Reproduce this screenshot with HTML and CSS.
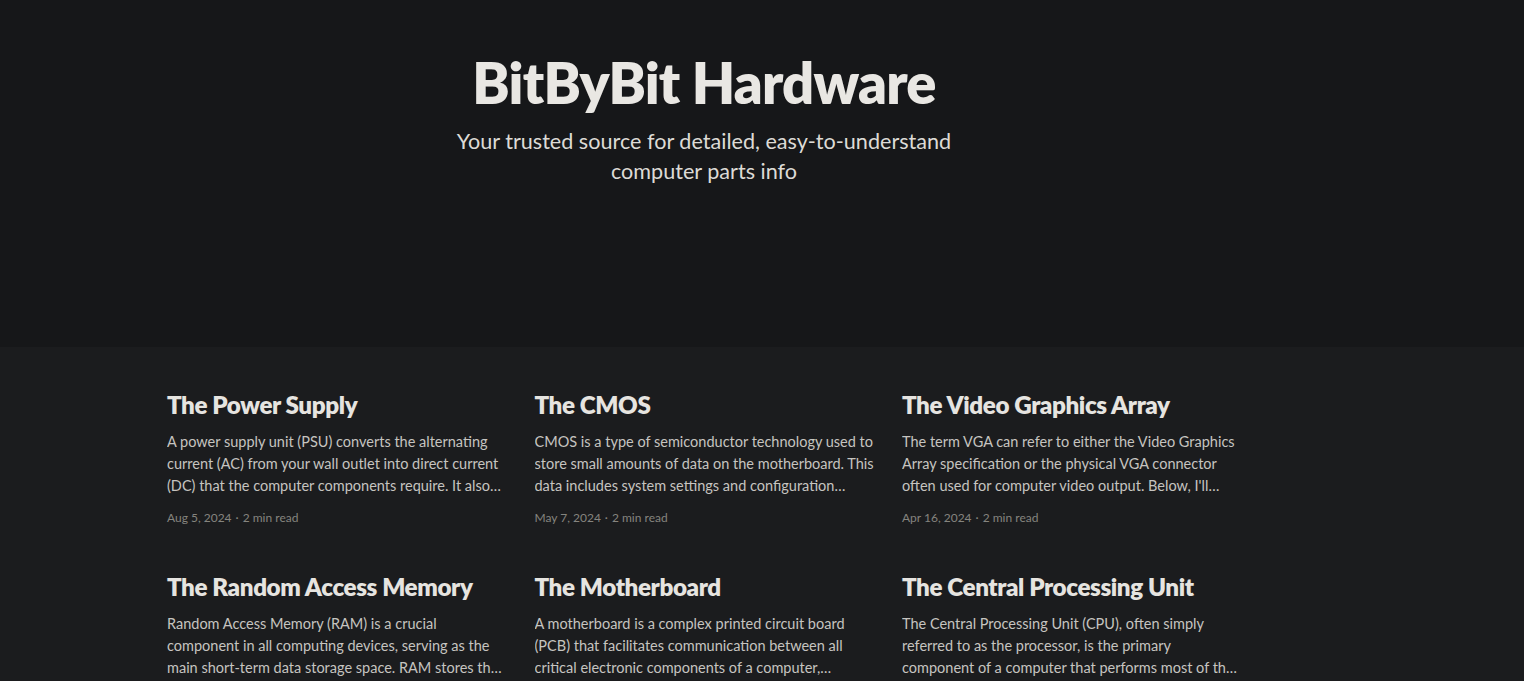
FILE: index.html
```html
<!DOCTYPE html>
<html lang="en">
<head>
<meta charset="utf-8">
<title>BitByBit Hardware</title>
<link rel="stylesheet" href="styles.css">
</head>
<body>
<header class="site-header">
  <div class="header-inner">
    <h1 class="site-title">BitByBit Hardware</h1>
    <p class="site-description">Your trusted source for detailed, easy-to-understand computer parts info</p>
  </div>
</header>
<main class="site-main">
  <div class="post-feed">
    <article class="post-card">
      <h2 class="post-title">The Power Supply</h2>
      <p class="post-excerpt">A power supply unit (PSU) converts the alternating current (AC) from your wall outlet into direct current (DC) that the computer components require. It also regulates the voltage</p>
      <div class="post-meta"><time>Aug 5, 2024</time><span class="dot">·</span><span>2 min read</span></div>
    </article>
    <article class="post-card">
      <h2 class="post-title">The CMOS</h2>
      <p class="post-excerpt">CMOS is a type of semiconductor technology used to store small amounts of data on the motherboard. This data includes system settings and configuration details</p>
      <div class="post-meta"><time>May 7, 2024</time><span class="dot">·</span><span>2 min read</span></div>
    </article>
    <article class="post-card">
      <h2 class="post-title">The Video Graphics Array</h2>
      <p class="post-excerpt">The term VGA can refer to either the Video Graphics Array specification or the physical VGA connector often used for computer video output. Below, I'll explain both</p>
      <div class="post-meta"><time>Apr 16, 2024</time><span class="dot">·</span><span>2 min read</span></div>
    </article>
    <article class="post-card">
      <h2 class="post-title">The Random Access Memory</h2>
      <p class="post-excerpt">Random Access Memory (RAM) is a crucial component in all computing devices, serving as the main short-term data storage space. RAM stores the data that</p>
      <div class="post-meta"><time>Apr 2, 2024</time><span class="dot">·</span><span>2 min read</span></div>
    </article>
    <article class="post-card">
      <h2 class="post-title">The Motherboard</h2>
      <p class="post-excerpt">A motherboard is a complex printed circuit board (PCB) that facilitates communication between all critical electronic components of a computer, including the CPU</p>
      <div class="post-meta"><time>Mar 20, 2024</time><span class="dot">·</span><span>2 min read</span></div>
    </article>
    <article class="post-card">
      <h2 class="post-title">The Central Processing Unit</h2>
      <p class="post-excerpt">The Central Processing Unit (CPU), often simply referred to as the processor, is the primary component of a computer that performs most of the processing</p>
      <div class="post-meta"><time>Mar 5, 2024</time><span class="dot">·</span><span>2 min read</span></div>
    </article>
  </div>
</main>
</body>
</html>
```

FILE: styles.css
```css
* { box-sizing: border-box; }
html, body { margin: 0; padding: 0; }
body {
  background: #1b1c1e;
  color: #e6e4e0;
  font-family: "Lato", "Noto Sans", sans-serif;
}
.site-header {
  background: #161719;
  height: 347px;
  padding-top: 52px;
}
.header-inner {
  width: 1408px;
  display: flex;
  flex-direction: column;
  align-items: center;
}
.site-title {
  margin: 0;
  font-size: 56px;
  line-height: 1.1;
  font-weight: 800;
  letter-spacing: -0.8px;
  color: #e9e7e3;
}
.site-description {
  margin: 12px 0 0;
  max-width: 530px;
  text-align: center;
  font-size: 21.6px;
  line-height: 30px;
  color: #dddbd6;
}
.site-main {
  padding: 42px 0 0 167px;
}
.post-feed {
  width: 1075px;
  display: grid;
  grid-template-columns: repeat(3, 340px);
  column-gap: 27.5px;
  row-gap: 45px;
}
.post-title {
  margin: 0;
  font-size: 24.2px;
  line-height: 32px;
  font-weight: 800;
  letter-spacing: -0.4px;
  color: #e6e4e0;
}
.post-excerpt {
  margin: 10px 0 0;
  font-size: 14.5px;
  line-height: 22px;
  color: #c6c4c0;
  display: -webkit-box;
  -webkit-line-clamp: 3;
  -webkit-box-orient: vertical;
  overflow: hidden;
}
.post-meta {
  margin-top: 13px;
  font-size: 12px;
  line-height: 16px;
  color: #85847f;
  display: flex;
  align-items: center;
}
.post-meta .dot { margin: 0 4px; }
```
